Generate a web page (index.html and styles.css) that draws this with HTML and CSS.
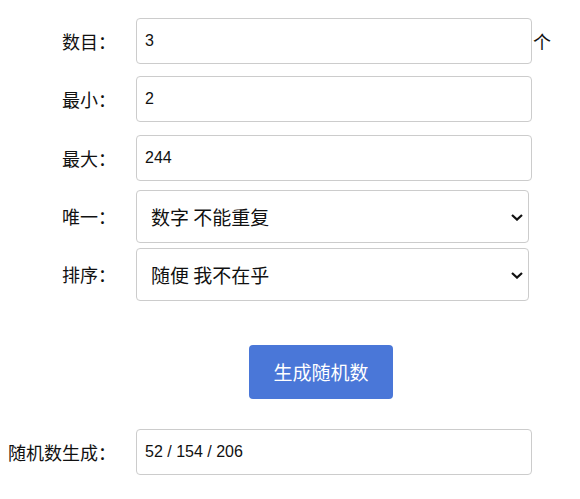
FILE: index.html
```html
<!DOCTYPE html>
<html lang="zh-CN">
<head>
<meta charset="utf-8">
<link rel="stylesheet" href="styles.css">
</head>
<body>
<form class="form">
  <div class="row">
    <label class="label">数目<span class="colon">：</span></label>
    <div class="field">
      <input class="text" type="text" value="3"><span class="unit">个</span>
    </div>
  </div>
  <div class="row">
    <label class="label">最小<span class="colon">：</span></label>
    <div class="field"><input class="text" type="text" value="2"></div>
  </div>
  <div class="row">
    <label class="label">最大<span class="colon">：</span></label>
    <div class="field"><input class="text" type="text" value="244"></div>
  </div>
  <div class="row">
    <label class="label">唯一<span class="colon">：</span></label>
    <div class="field select-wrap">
      <select class="choice"><option>数字 不能重复</option><option>数字 可以重复</option></select>
      <svg class="chevron" width="12" height="7" viewBox="0 0 12 7"><path d="M1 1 L6 5.6 L11 1" fill="none" stroke="#111" stroke-width="2.2"/></svg>
    </div>
  </div>
  <div class="row">
    <label class="label">排序<span class="colon">：</span></label>
    <div class="field select-wrap">
      <select class="choice"><option>随便 我不在乎</option><option>从小到大</option></select>
      <svg class="chevron" width="12" height="7" viewBox="0 0 12 7"><path d="M1 1 L6 5.6 L11 1" fill="none" stroke="#111" stroke-width="2.2"/></svg>
    </div>
  </div>
  <div class="row row-button">
    <span class="label"></span>
    <div class="field"><button type="button" class="btn">生成随机数</button></div>
  </div>
  <div class="row row-output">
    <label class="label">随机数生成<span class="colon">：</span></label>
    <div class="field"><input class="text" type="text" value="52 / 154 / 206"></div>
  </div>
</form>
</body>
</html>
```
FILE: styles.css
```css
html, body {
  margin: 0;
  padding: 0;
  background: #fff;
}
body {
  margin: 8px;
  font-family: "Noto Sans CJK SC", "Liberation Sans", sans-serif;
  color: #111;
}
.form {
  padding-top: 4px;
  display: flex;
  flex-direction: column;
}
.row {
  display: flex;
  align-items: center;
  height: 58.33px;
}
.label {
  width: 108px;
  flex: none;
  text-align: right;
  font-size: 18px;
  line-height: 24px;
  margin-right: 20px;
  white-space: nowrap;
}
.colon {
  font-family: "Noto Sans CJK TC", sans-serif;
}
.field {
  display: flex;
  align-items: center;
}
.text {
  box-sizing: border-box;
  width: 396px;
  height: 46px;
  border: 1px solid #ccc;
  border-radius: 4px;
  padding: 0 8px;
  font-family: "Liberation Sans", Arial, sans-serif;
  font-size: 16px;
  color: #111;
  background: #fff;
  outline: none;
}
.unit {
  font-size: 18px;
  line-height: 24px;
  margin-left: 1px;
}
.select-wrap {
  position: relative;
}
.choice {
  box-sizing: border-box;
  width: 393px;
  height: 53px;
  border: 1px solid #ccc;
  border-radius: 4px;
  padding: 0 30px 0 14px;
  font-family: "Noto Sans CJK SC", sans-serif;
  font-size: 19px;
  color: #111;
  background: #fff;
  -webkit-appearance: none;
  appearance: none;
}
.chevron {
  position: absolute;
  right: 6px;
  top: 24px;
  pointer-events: none;
}
.row-button {
  height: 54px;
  margin-top: 41px;
}
.btn {
  margin-left: 113px;
  width: 144px;
  height: 54px;
  border: none;
  border-radius: 4px;
  background: #4a77d8;
  color: #fff;
  font-family: "Noto Sans CJK SC", sans-serif;
  font-size: 19px;
}
.row-output {
  height: 46px;
  margin-top: 30px;
}
```
